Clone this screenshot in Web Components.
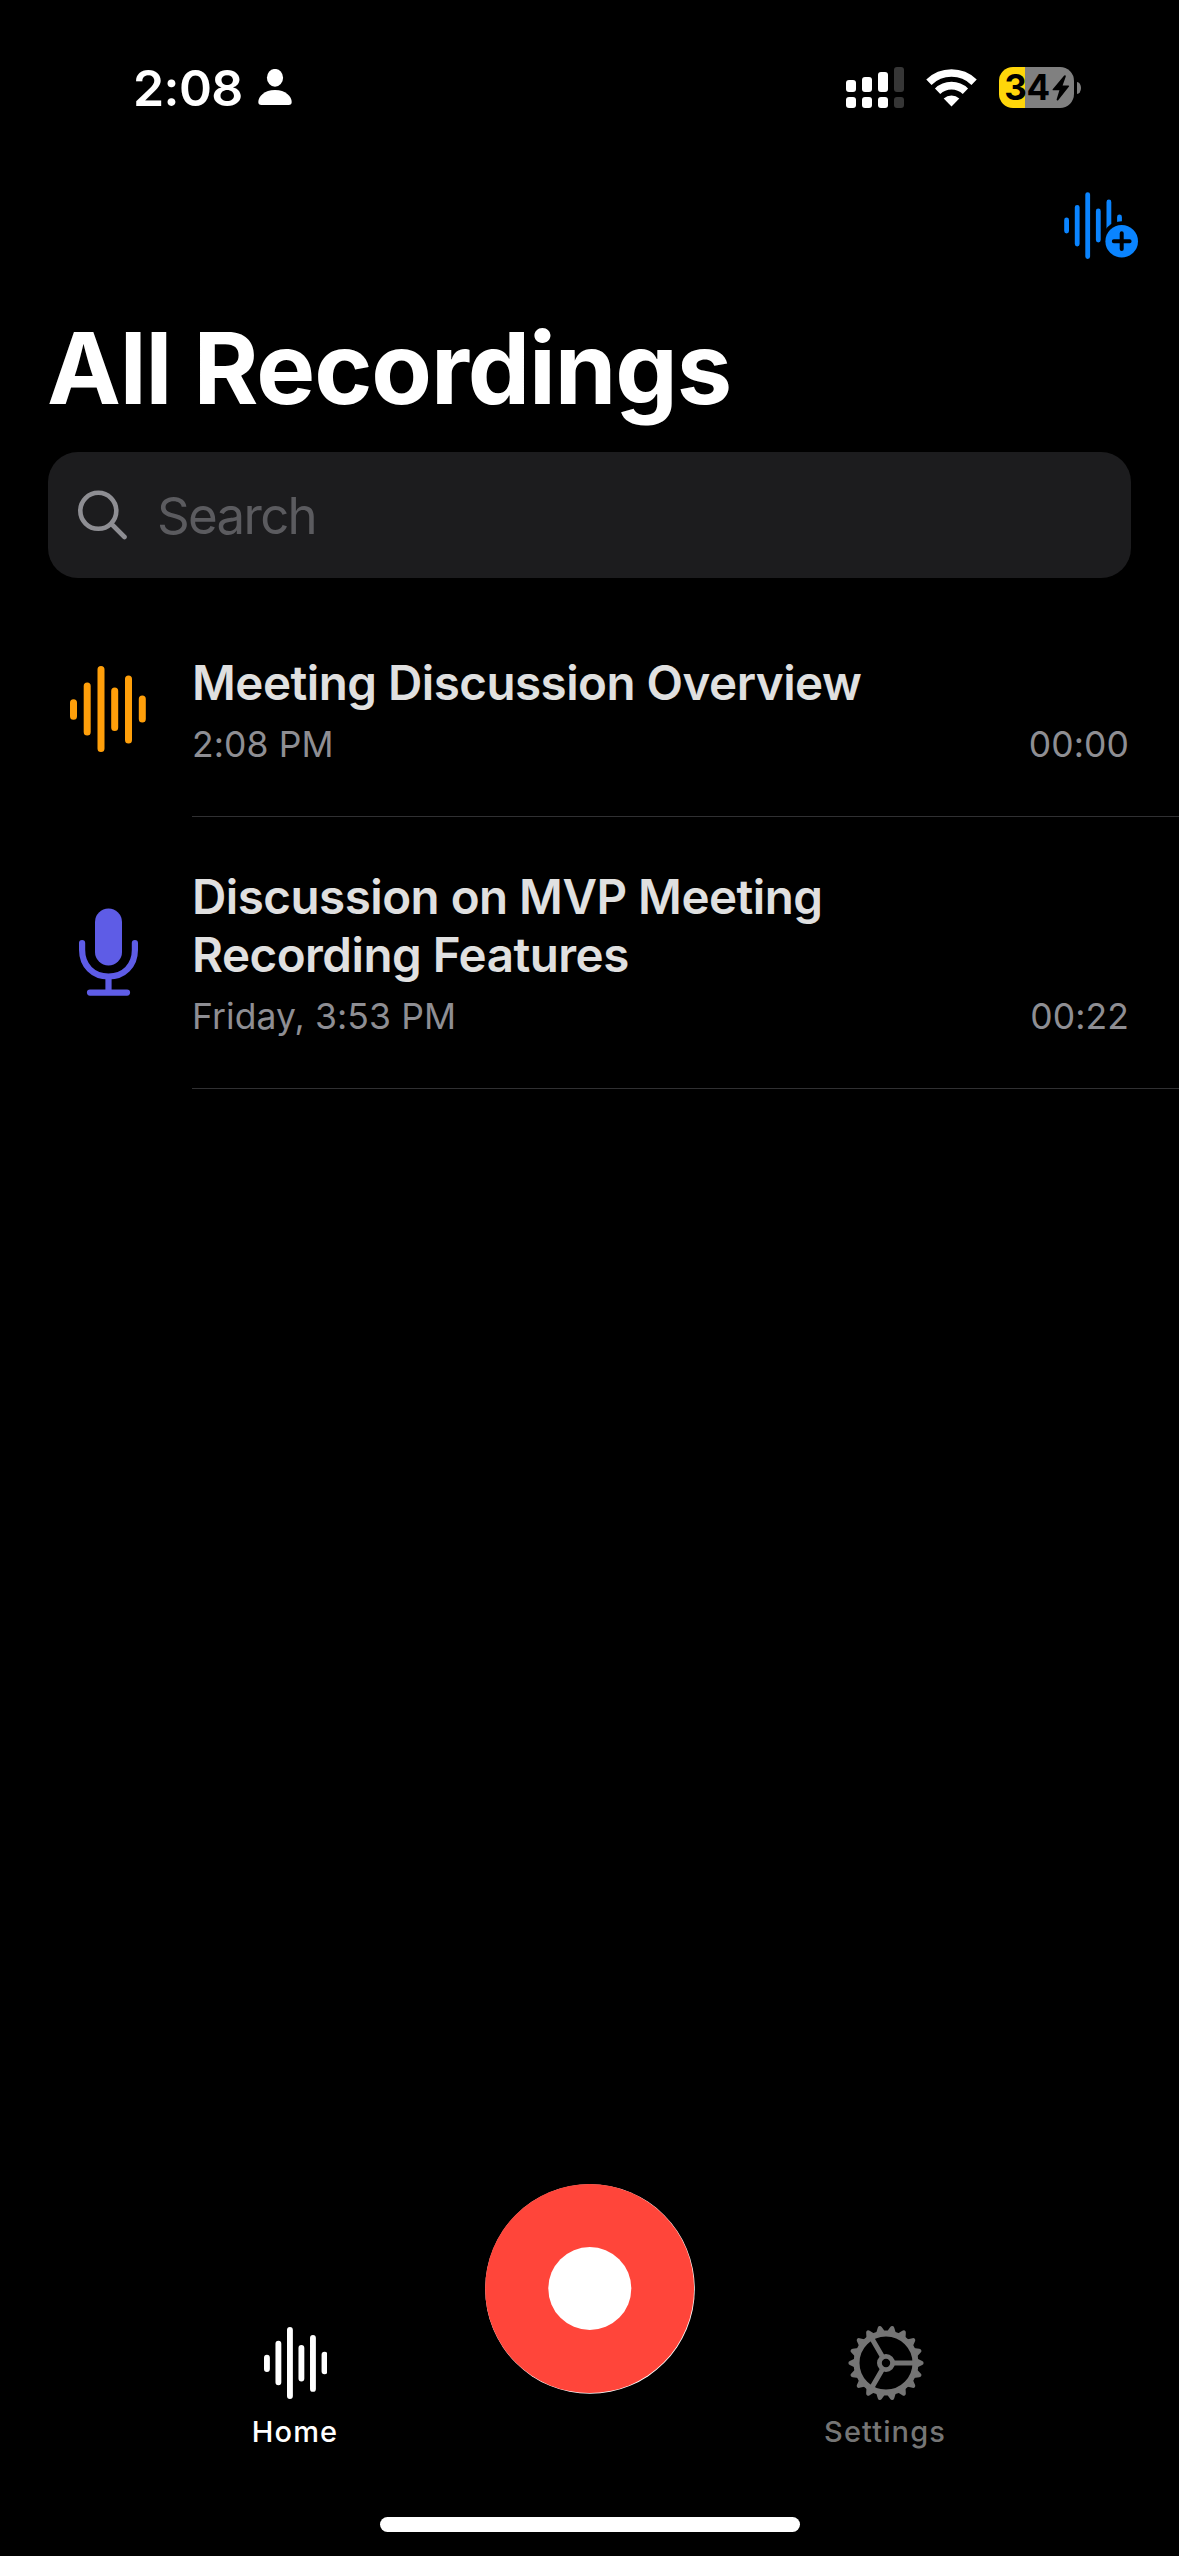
<!DOCTYPE html>
<html lang="en">
<head>
<meta charset="UTF-8">
<title>All Recordings</title>
<style>
    body {
        margin: 0;
        background: #000;
        font-family: Inter, "Liberation Sans", sans-serif;
    }
</style>
</head>
<body>
<recordings-app></recordings-app>

<script>
const icons = {
    waveform: `
        <svg width="76" height="86" viewBox="0 0 76 86" stroke="currentColor" stroke-width="7" stroke-linecap="round">
            <path d="M3.5 36.7V50.2M17.2 20V66M31 3.5V82.5M44.7 25V61.5M58.5 13V74M72.3 33V53"/>
        </svg>`,
    mic: `
        <svg width="60" height="88" viewBox="0 0 60 88" fill="none" stroke="currentColor" stroke-width="6.2" stroke-linecap="round">
            <rect x="17" y="0.5" width="27" height="57" rx="13.5" fill="currentColor" stroke="none"/>
            <path d="M4.1 35V42C4.1 57.5 15 68.5 30.5 68.5S56.9 57.5 56.9 42V35M30.5 69V83M12 84.6H49"/>
        </svg>`,
    search: `
        <svg width="50" height="50" viewBox="0 0 50 50" fill="none" stroke="currentColor" stroke-width="4.6" stroke-linecap="round">
            <circle cx="20.3" cy="20.8" r="18"/>
            <path d="M33.5 34L46.5 47"/>
        </svg>`,
    waveAdd: `
        <svg width="76" height="68" viewBox="0 0 76 68" fill="none" stroke="#0a84ff" stroke-width="4.8" stroke-linecap="round">
            <path d="M2.6 28V39M13.2 15.3V52M23.7 2.6V64.5M34.3 19V48M44.9 10V46M55.5 25V34"/>
            <circle cx="57.7" cy="49.2" r="20" fill="#000" stroke="none"/>
            <circle cx="57.7" cy="49.2" r="16.3" fill="#0a84ff" stroke="none"/>
            <path d="M57.7 41.3V57.1M49.8 49.2H65.6" stroke="#000" stroke-width="4"/>
        </svg>`,
    gear: `
        <svg width="76" height="76" viewBox="-38 -38 76 76" fill="none" stroke="currentColor">
            <circle r="29.5" stroke-width="6"/>
            <circle r="6.6" stroke-width="4.8"/>
            <path stroke-width="5" d="M8 0H28M-4 6.93L-14 24.25M-4 -6.93L-14 -24.25"/>
            <g fill="currentColor" stroke="none">
                ${Array.from({ length: 18 }, (_, i) => `<path transform="rotate(${i * 20})" d="M31 -4.6L36.2 -2Q37.6 -1.4 37.6 0T36.2 2L31 4.6Z"/>`).join('')}
            </g>
        </svg>`,
    person: `
        <svg width="34" height="37" viewBox="0 0 34 37" fill="currentColor">
            <ellipse cx="17" cy="8.8" rx="8.1" ry="8.9"/>
            <path d="M3.5 36C1.2 36 .3 35 .3 33C.3 27.5 6.5 21 17 21S33.7 27.5 33.7 33C33.7 35 32.8 36 30.5 36Z"/>
        </svg>`,
    cellular: `
        <svg class="cellular" width="58" height="41" viewBox="0 0 58 41" fill="#fff">
            <rect x="0" y="13" width="10" height="12" rx="3"/>
            <rect x="16" y="10" width="10" height="15" rx="3"/>
            <rect x="32" y="5" width="10" height="20" rx="3"/>
            <rect x="48" y="0" width="10" height="25" rx="3" fill="#363636"/>
            <rect x="0" y="30" width="10" height="11" rx="3"/>
            <rect x="16" y="30" width="10" height="11" rx="3"/>
            <rect x="32" y="30" width="10" height="11" rx="3"/>
            <rect x="48" y="30" width="10" height="11" rx="3" fill="#363636"/>
        </svg>`,
    wifi: `
        <svg width="52" height="38" viewBox="0 0 52 38" fill="none" stroke="#fff" stroke-width="7.6">
            <path d="M3.9 13.2A32.5 32.5 0 0 1 49.1 13.2"/>
            <path d="M12.6 22.2A20 20 0 0 1 40.4 22.2"/>
            <path d="M26.5 37.5L18.7 29.6A11.5 11.5 0 0 1 34.3 29.6Z" fill="#fff" stroke="none"/>
        </svg>`,
    bolt: `
        <svg width="18" height="26" viewBox="0 0 18 26" fill="#000">
            <path d="M12.2 .6L.7 14.2Q.2 15.3 1.3 15.3H7.4L4.6 24.4Q4.8 26.2 6.2 25.2L17 11.6Q17.6 10.5 16.4 10.4H10.6L13.8 1.6Q13.8 -.4 12.2 .6Z"/>
        </svg>`
};

class BatteryLevel extends HTMLElement {
    constructor() {
        super();
        this.attachShadow({ mode: 'open' });
        this.shadowRoot.innerHTML = `
            <style>
                :host {
                    display: flex;
                    align-items: center;
                    gap: 3px;
                }
                .cell {
                    display: flex;
                    align-items: center;
                    justify-content: center;
                    gap: 2px;
                    box-sizing: border-box;
                    width: 75px;
                    height: 41px;
                    padding-left: 1px;
                    border-radius: 14px;
                    background: linear-gradient(90deg, #ffd60a 26px, #808080 26px);
                    color: #000;
                    font-size: 35px;
                    font-weight: 700;
                    line-height: 41px;
                    letter-spacing: -0.5px;
                }
                .nub {
                    width: 4px;
                    height: 12px;
                    border-radius: 0 4px 4px 0 / 0 6px 6px 0;
                    background: #808080;
                }
                svg { display: block; }
            </style>
            <div class="cell"><slot></slot>${icons.bolt}</div>
            <div class="nub"></div>
        `;
    }
}

class StatusBar extends HTMLElement {
    constructor() {
        super();
        this.attachShadow({ mode: 'open' });
        this.shadowRoot.innerHTML = `
            <style>
                :host {
                    display: flex;
                    justify-content: space-between;
                    align-items: center;
                    box-sizing: border-box;
                    height: 175px;
                    padding: 0 98px 0 133px;
                    color: #fff;
                }
                .time, .signals {
                    display: flex;
                    align-items: center;
                }
                .time {
                    gap: 15px;
                    font-size: 50px;
                    font-weight: 600;
                    letter-spacing: -0.6px;
                }
                .signals { gap: 22px; }
                .cellular { margin-right: -1px; }
                svg { display: block; }
            </style>
            <div class="time"><span>2:08</span>${icons.person}</div>
            <div class="signals">
                ${icons.cellular}
                ${icons.wifi}
                <battery-level>34</battery-level>
            </div>
        `;
    }
}

class PageHeader extends HTMLElement {
    constructor() {
        super();
        this.attachShadow({ mode: 'open' });
        this.shadowRoot.innerHTML = `
            <style>
                :host {
                    display: flex;
                    flex-direction: column;
                    height: 277px;
                    padding: 0 39px 0 47px;
                    color: #fff;
                }
                .actions {
                    display: flex;
                    justify-content: flex-end;
                    padding-top: 17px;
                    height: 68px;
                }
                h1 {
                    margin: 48px 0 0;
                    font-size: 99px;
                    font-weight: 700;
                    line-height: 120px;
                    letter-spacing: -1.1px;
                    white-space: nowrap;
                }
            </style>
            <div class="actions">${icons.waveAdd}</div>
            <h1><slot></slot></h1>
        `;
    }
}

class SearchField extends HTMLElement {
    constructor() {
        super();
        this.attachShadow({ mode: 'open' });
        this.shadowRoot.innerHTML = `
            <style>
                :host {
                    display: flex;
                    align-items: center;
                    gap: 29px;
                    box-sizing: border-box;
                    height: 126px;
                    margin: 0 48px;
                    padding: 0 30px;
                    border-radius: 30px;
                    background: #1c1c1e;
                    color: #5b5b5f;
                    font-size: 51px;
                    letter-spacing: -1.7px;
                }
                svg { color: #8e8e93; }
            </style>
            ${icons.search}
            <span><slot></slot></span>
        `;
    }
}

class RecordingItem extends HTMLElement {
    constructor() {
        super();
        this.attachShadow({ mode: 'open' });
    }

    set recording(data) {
        this.shadowRoot.innerHTML = `
            <style>
                :host {
                    display: flex;
                }
                .icon {
                    display: flex;
                    align-items: center;
                    justify-content: center;
                    width: 120px;
                    padding: 0 24px 2px 48px;
                    color: ${data.color};
                }
                .body {
                    flex: 1;
                    padding: 51px 50px 47px 0;
                    border-bottom: 1px solid #303032;
                }
                h2 {
                    margin: 0;
                    max-width: 760px;
                    color: #e0e0e0;
                    font-size: 47.5px;
                    font-weight: 600;
                    line-height: 58px;
                    letter-spacing: -0.5px;
                }
                .meta {
                    display: flex;
                    justify-content: space-between;
                    margin-top: 9px;
                    color: #8e8e93;
                    font-size: 35.5px;
                    line-height: 48px;
                    letter-spacing: 0.1px;
                }
            </style>
            <div class="icon">${icons[data.icon]}</div>
            <div class="body">
                <h2>${data.title}</h2>
                <div class="meta"><span>${data.date}</span><span>${data.duration}</span></div>
            </div>
        `;
    }
}

class RecordingList extends HTMLElement {
    constructor() {
        super();
        this.attachShadow({ mode: 'open' });
        this.shadowRoot.innerHTML = `
            <style>
                :host {
                    display: block;
                    flex: 1;
                    padding-top: 25px;
                }
            </style>
        `;
    }

    set recordings(list) {
        list.forEach(recording => {
            const item = document.createElement('recording-item');
            item.recording = recording;
            this.shadowRoot.appendChild(item);
        });
    }
}

class TabItem extends HTMLElement {
    constructor() {
        super();
        this.attachShadow({ mode: 'open' });
        this.shadowRoot.innerHTML = `
            <style>
                :host {
                    display: flex;
                    flex-direction: column;
                    align-items: center;
                    width: 200px;
                    padding-top: 140px;
                    color: #757575;
                    font-size: 29px;
                    font-weight: 500;
                    line-height: 36px;
                    letter-spacing: 1.1px;
                }
                :host([active]) { color: #fff; }
                .icon {
                    display: flex;
                    align-items: center;
                    justify-content: center;
                    height: 78px;
                    margin-bottom: 12px;
                    padding-left: 1px;
                }
                :host([icon="waveform"]) svg {
                    width: 63.6px;
                    height: 72px;
                }
            </style>
            <div class="icon">${icons[this.getAttribute('icon')]}</div>
            <span><slot></slot></span>
        `;
    }
}

class RecordButton extends HTMLElement {
    constructor() {
        super();
        this.attachShadow({ mode: 'open' });
        this.shadowRoot.innerHTML = `
            <style>
                :host { display: block; }
                svg { display: block; }
            </style>
            <svg width="210" height="210" viewBox="0 0 210 210">
                <circle cx="105" cy="105" r="104.8" fill="#fff"/>
                <circle cx="104.6" cy="104.6" r="104.5" fill="#ff453a"/>
                <circle cx="104.8" cy="104.5" r="41.5" fill="#fff"/>
            </svg>
        `;
    }
}

class TabBar extends HTMLElement {
    constructor() {
        super();
        this.attachShadow({ mode: 'open' });
        this.shadowRoot.innerHTML = `
            <style>
                :host {
                    display: block;
                    height: 372px;
                }
                .tabs {
                    display: flex;
                    justify-content: space-between;
                    height: 333px;
                    padding: 0 194px 0 195px;
                }
                .home-indicator {
                    width: 420px;
                    height: 15px;
                    margin: 0 auto;
                    border-radius: 8px;
                    background: #fff;
                }
            </style>
            <div class="tabs">
                <tab-item icon="waveform" active>Home</tab-item>
                <record-button></record-button>
                <tab-item icon="gear">Settings</tab-item>
            </div>
            <div class="home-indicator"></div>
        `;
    }
}

class RecordingsApp extends HTMLElement {
    constructor() {
        super();
        this.attachShadow({ mode: 'open' });
        this.shadowRoot.innerHTML = `
            <style>
                :host {
                    display: flex;
                    flex-direction: column;
                    width: 1179px;
                    height: 2556px;
                    overflow: hidden;
                    background: #000;
                }
            </style>
            <status-bar></status-bar>
            <page-header>All Recordings</page-header>
            <search-field>Search</search-field>
            <recording-list></recording-list>
            <tab-bar></tab-bar>
        `;
    }

    connectedCallback() {
        this.shadowRoot.querySelector('recording-list').recordings = [
            {
                icon: 'waveform',
                color: '#ff9f0a',
                title: 'Meeting Discussion Overview',
                date: '2:08 PM',
                duration: '00:00'
            },
            {
                icon: 'mic',
                color: '#5e5ce6',
                title: 'Discussion on MVP Meeting Recording Features',
                date: 'Friday, 3:53 PM',
                duration: '00:22'
            }
        ];
    }
}

customElements.define('battery-level', BatteryLevel);
customElements.define('status-bar', StatusBar);
customElements.define('page-header', PageHeader);
customElements.define('search-field', SearchField);
customElements.define('recording-item', RecordingItem);
customElements.define('recording-list', RecordingList);
customElements.define('tab-item', TabItem);
customElements.define('record-button', RecordButton);
customElements.define('tab-bar', TabBar);
customElements.define('recordings-app', RecordingsApp);
</script>
</body>
</html>
